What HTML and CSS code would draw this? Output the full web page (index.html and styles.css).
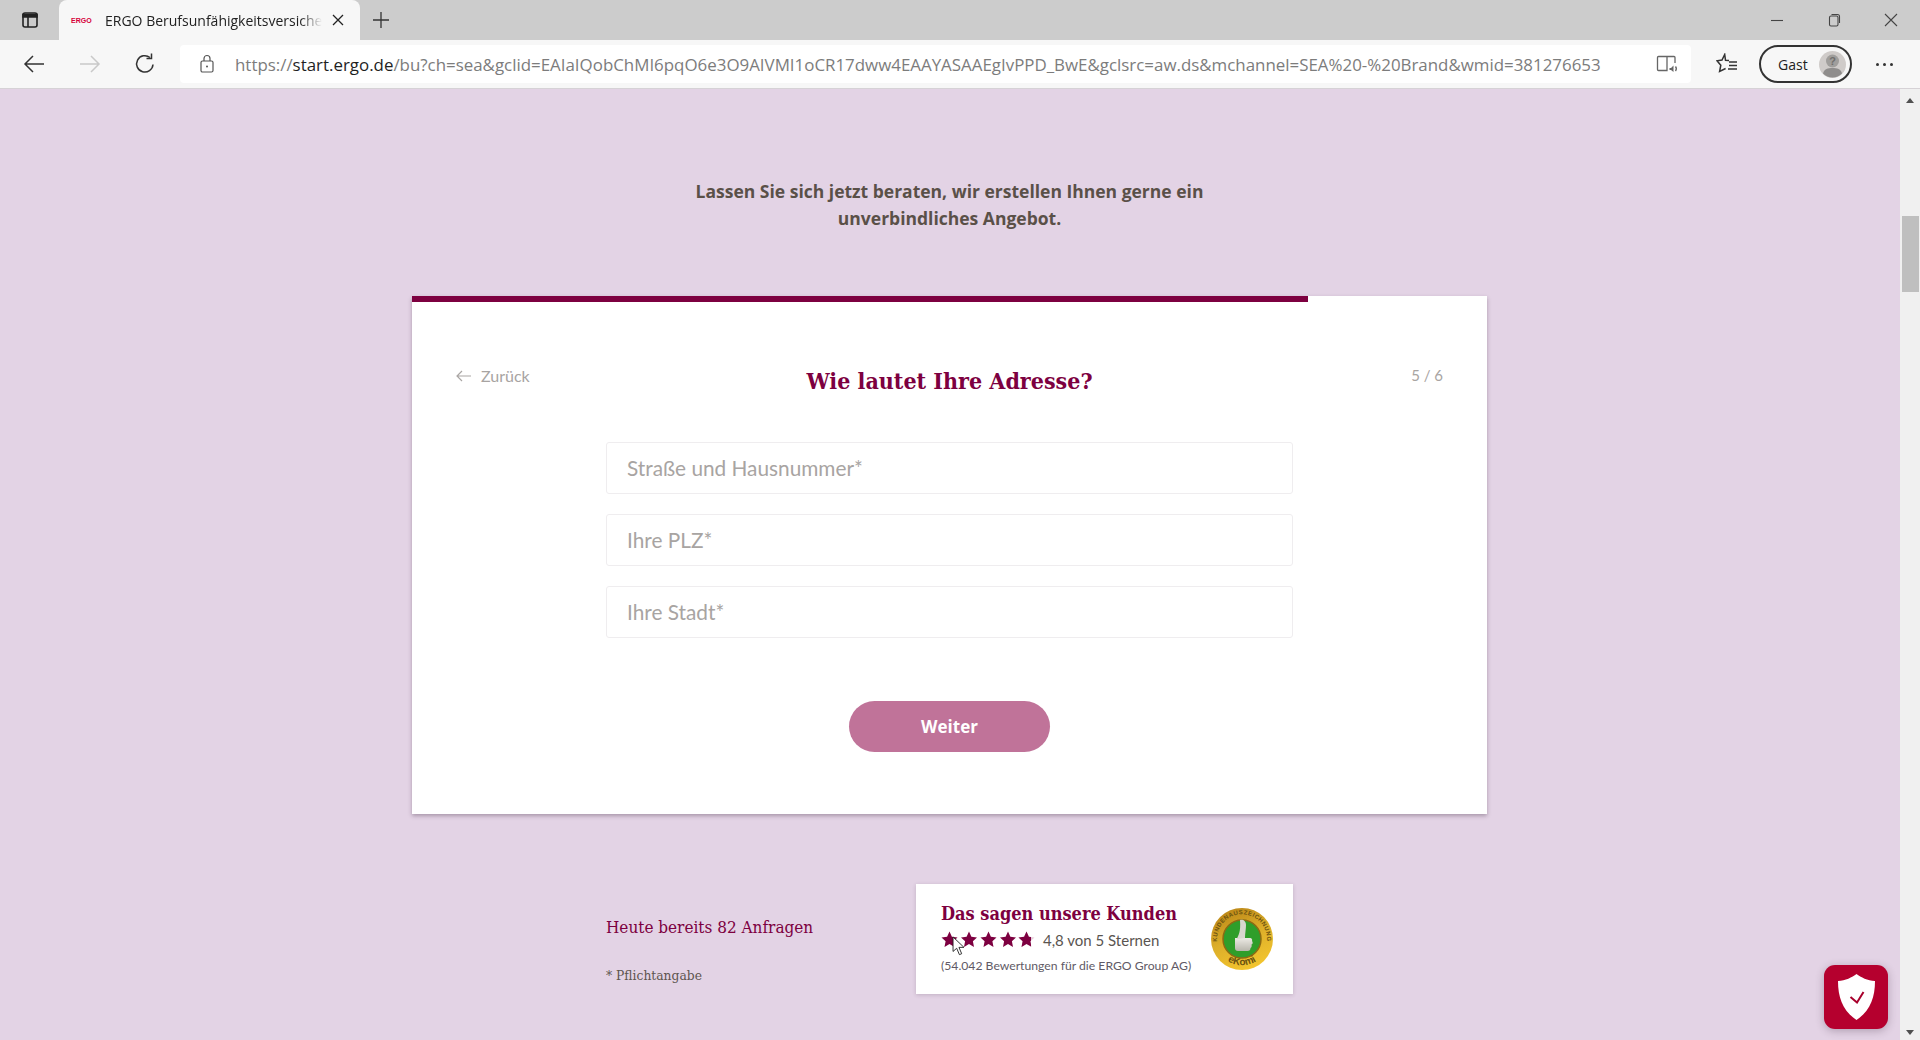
FILE: index.html
```html
<!DOCTYPE html>
<html>
<head>
    <title>ERGO Berufsunfähigkeitsversicherung</title>
    <link rel="stylesheet" href="styles.css">
</head>
<body>
    <div class="tabstrip">
        <div class="tab-menu">
            <svg width="20" height="20" viewBox="0 0 20 20" fill="none" stroke="#222" stroke-width="1.6"><rect x="3" y="3" width="14" height="14" rx="2"/><path d="M3 4.500h14v2.500H3z" fill="#222"/><path d="M8 7v10"/></svg>
        </div>
        <div class="tab">
            <span class="tab-logo">ERGO</span>
            <span class="tab-title">ERGO Berufsunfähigkeitsversiche</span>
            <svg class="tab-close" width="12" height="12" viewBox="0 0 12 12" stroke="#222" stroke-width="1.3"><path d="M1 1l10 10M11 1L1 11"/></svg>
        </div>
        <svg class="tab-new" width="18" height="18" viewBox="0 0 18 18" stroke="#333" stroke-width="1.3"><path d="M9 1v16M1 9h16"/></svg>
        <div class="win-buttons">
            <svg width="14" height="14" viewBox="0 0 14 14" stroke="#444" stroke-width="1.1" fill="none"><path d="M1 7.500h12"/></svg>
            <svg width="14" height="14" viewBox="0 0 14 14" stroke="#444" stroke-width="1.1" fill="none"><rect x="2.500" y="3" width="8.500" height="10" rx="1.500"/><path d="M4.500 1.500h6a2 2 0 0 1 2 2V10"/></svg>
            <svg width="14" height="14" viewBox="0 0 14 14" stroke="#444" stroke-width="1.1" fill="none"><path d="M1 1l12 12M13 1L1 13"/></svg>
        </div>
    </div>

    <div class="toolbar">
        <svg class="nav-back" width="24" height="24" viewBox="0 0 24 24" fill="none" stroke="#333" stroke-width="1.5"><path d="M22 12H3M11 4l-8 8 8 8"/></svg>
        <svg class="nav-forward" width="24" height="24" viewBox="0 0 24 24" fill="none" stroke="#c9c9c9" stroke-width="1.5"><path d="M2 12h19M13 4l8 8-8 8"/></svg>
        <svg class="nav-reload" width="24" height="24" viewBox="0 0 24 24" fill="none" stroke="#333" stroke-width="1.5"><path d="M20 12.500a8.200 8.200 0 1 1-3-7"/><path d="M18.500 1.500v5h-5"/></svg>
        <div class="addressbar">
            <svg width="16" height="20" viewBox="0 0 16 20" fill="none" stroke="#555" stroke-width="1.2"><rect x="2" y="7" width="12" height="11" rx="1.500"/><path d="M5 7V4.500a3 3 0 0 1 6 0V7"/><circle cx="8" cy="12.500" r="1" fill="#555" stroke="none"/></svg>
            <div class="url">https://<b>start.ergo.de</b>/bu?ch=sea&amp;gclid=EAIaIQobChMI6pqO6e3O9AIVMI1oCR17dww4EAAYASAAEgIvPPD_BwE&amp;gclsrc=aw.ds&amp;mchannel=SEA%20-%20Brand&amp;wmid=381276653</div>
            <svg class="read-aloud" width="22" height="20" viewBox="0 0 22 20" fill="none" stroke="#666" stroke-width="1.300"><path d="M11 2.500H2.500a1 1 0 0 0-1 1v12a1 1 0 0 0 1 1H11V2.500h7a1 1 0 0 1 1 1V9"/><path d="M13.500 14h1.500l2.500-2.500v6.500L15 16h-1.500z" fill="#666" stroke="none"/><path d="M19.500 12.500c.9 1.200.9 3.300 0 4.500"/></svg>
        </div>
        <svg class="fav" width="22" height="22" viewBox="0 0 22 22" fill="none" stroke="#333" stroke-width="1.500"><path d="M13 7.500l-3.500-.3L8.700 1.500 6 7 1 7.800l3.800 4.400-1.200 6.300 6-3"/><path d="M13 9h8M13 12.500h8M12 16h9"/></svg>
        <div class="profile">
            <span>Gast</span>
            <svg width="27" height="27" viewBox="0 0 27 27"><circle cx="13.500" cy="13.500" r="13.500" fill="#cfcbc9"/><circle cx="13.500" cy="10" r="6.500" fill="#a09e9c"/><path d="M4 22.500c1-4.500 5-5.500 9.500-5.500s8.500 1 9.500 5.500a13.500 13.500 0 0 1-19 0z" fill="#8f8d8c"/><text x="13.500" y="13.500" class="profile-q">?</text></svg>
        </div>
        <div class="more"><i></i><i></i><i></i></div>
    </div>

    <div class="viewport">
        <main class="page">
            <p class="intro">Lassen Sie sich jetzt beraten, wir erstellen Ihnen gerne ein<br>unverbindliches Angebot.</p>

            <section class="card">
                <div class="progress"><div class="progress-fill"></div></div>
                <div class="card-head">
                    <a class="back"><svg width="16" height="12" viewBox="0 0 16 12" fill="none" stroke="#aaa6a4" stroke-width="1.200"><path d="M15 6H1M6 1L1 6l5 5"/></svg>Zurück</a>
                    <h1>Wie lautet Ihre Adresse?</h1>
                    <span class="step">5 / 6</span>
                </div>
                <form class="fields">
                    <div class="field">Straße und Hausnummer*</div>
                    <div class="field">Ihre PLZ*</div>
                    <div class="field">Ihre Stadt*</div>
                </form>
                <button class="next" type="button">Weiter</button>
            </section>

            <div class="below">
                <div class="notes">
                    <div class="requests">Heute bereits 82 Anfragen</div>
                    <div class="required">* Pflichtangabe</div>
                </div>
                <div class="rating">
                    <div class="rating-text">
                        <h2>Das sagen unsere Kunden</h2>
                        <div class="stars-row">
                            <svg width="94" height="17" viewBox="0 0 94 17" fill="#7d0040">
                                <defs>
                                    <path id="star" d="M8.500 0.500l2.400 5.200 5.600.7-4.100 3.900 1.100 5.600-5-2.800-5 2.800 1.100-5.600L.5 6.400l5.600-.7z"/>
                                    <clipPath id="partial"><rect x="0" y="0" width="13" height="17"/></clipPath>
                                </defs>
                                <use href="#star"/>
                                <use href="#star" x="19.500"/>
                                <use href="#star" x="39"/>
                                <use href="#star" x="58.500"/>
                                <g transform="translate(77 0)">
                                    <use href="#star" opacity="0.2"/>
                                    <g clip-path="url(#partial)"><use href="#star"/></g>
                                </g>
                            </svg>
                            <span>4,8 von 5 Sternen</span>
                        </div>
                        <div class="count">(54.042 Bewertungen für die ERGO Group AG)</div>
                    </div>
                    <svg class="ekomi" width="62" height="62" viewBox="0 0 62 62">
                        <defs>
                            <linearGradient id="gold" x1="0.200" y1="0" x2="0.600" y2="1">
                                <stop offset="0" stop-color="#b98416"/>
                                <stop offset="0.500" stop-color="#dcae2a"/>
                                <stop offset="1" stop-color="#f3c52e"/>
                            </linearGradient>
                            <linearGradient id="silver" x1="0" y1="0" x2="0" y2="1">
                                <stop offset="0" stop-color="#eceae4"/>
                                <stop offset="1" stop-color="#b8b6ac"/>
                            </linearGradient>
                            <path id="ring" d="M9.500 44a25 25 0 1 1 43 0"/>
                            <path id="ring-low" d="M7 42a26.500 26.500 0 0 0 48 0"/>
                        </defs>
                        <circle cx="31" cy="31" r="31" fill="url(#gold)"/>
                        <circle cx="31" cy="31" r="19" fill="#2f9e2a" stroke="#8b6a14" stroke-width="1.500"/>
                        <path d="M24 30h15c2 0 2.500 2 2 3 1 1 1 3-.5 3.500.5 1.500 0 3-1 3.500 0 2-1 3-3 3H27c-2 0-3-1-3-3z" fill="url(#silver)"/>
                        <path d="M26 31c1-4 4-6 3-19 3-1 6 1 6 5 0 4-1 8-1 13z" fill="#d8d6ce"/>
                        <text class="ekomi-ring"><textPath href="#ring" startOffset="50%">KUNDENAUSZEICHNUNG</textPath></text>
                        <text class="ekomi-name"><textPath href="#ring-low" startOffset="50%">eKomi</textPath></text>
                    </svg>
                </div>
            </div>

            <div class="shield">
                <svg width="37" height="46" viewBox="0 0 37 46"><path d="M18.500 0c4.500 3.500 11 6.500 18.500 7 0 17-5 30-18.500 39C5 37 0 24 0 7c7.500-.5 14-3.500 18.500-7z" fill="#fff"/><path d="M12.500 23l6.500 5.500L25.500 18" fill="none" stroke="#a8002c" stroke-width="2"/></svg>
            </div>
            <svg class="cursor" width="13" height="20" viewBox="0 0 14 22"><path d="M1 1v16l4-3.500 3 7 2.500-1-3-7H13z" fill="#fff" stroke="#222" stroke-width="1"/></svg>
        </main>

        <div class="scrollbar">
            <div class="arrow-up"></div>
            <div class="thumb"></div>
            <div class="arrow-down"></div>
        </div>
    </div>
</body>
</html>
```

FILE: styles.css
```css
html, body {
    height: 100%;
}
body {
    margin: 0;
    height: 1040px;
    overflow: hidden;
    display: flex;
    flex-direction: column;
    font-family: "Lato", sans-serif;
    background: #e3d3e5;
}

/* browser chrome */
.tabstrip {
    height: 40px;
    background: #cccccc;
    display: flex;
    align-items: center;
    flex-shrink: 0;
}
.tab-menu {
    width: 59px;
    display: flex;
    justify-content: center;
}
.tab {
    width: 301px;
    height: 40px;
    box-sizing: border-box;
    padding: 0 16px 0 12px;
    background: #f7f7f7;
    border-radius: 8px 8px 0 0;
    display: flex;
    align-items: center;
    font-family: "Open Sans", sans-serif;
    font-size: 14px;
    color: #222;
}
.tab-logo {
    width: 28px;
    flex-shrink: 0;
    font-family: "Liberation Sans", sans-serif;
    font-size: 7px;
    font-weight: 700;
    color: #d6003a;
}
.tab-title {
    flex: 1;
    min-width: 0;
    margin-left: 6px;
    white-space: nowrap;
    -webkit-mask-image: linear-gradient(to right, #000 90%, transparent 100%);
    mask-image: linear-gradient(to right, #000 90%, transparent 100%);
}
.tab-close {
    margin-left: 10px;
    flex-shrink: 0;
}
.tab-new {
    margin-left: 12px;
}
.win-buttons {
    margin-left: auto;
    padding-right: 22px;
    display: flex;
    gap: 43px;
    align-items: center;
}
.toolbar {
    height: 48px;
    background: #f7f7f7;
    border-bottom: 1px solid #d6d2d6;
    display: flex;
    align-items: center;
    flex-shrink: 0;
}
.nav-back {
    margin-left: 22px;
}
.nav-forward {
    margin-left: 32px;
}
.nav-reload {
    margin-left: 31px;
}
.addressbar {
    margin-left: 23px;
    width: 1511px;
    height: 38px;
    box-sizing: border-box;
    padding-left: 19px;
    background: #fff;
    border-radius: 4px;
    display: flex;
    align-items: center;
}
.url {
    margin-left: 20px;
    flex: 1;
    min-width: 0;
    white-space: nowrap;
    font-family: "Open Sans", sans-serif;
    font-size: 16.9px;
    color: #7c7c7c;
}
.url b {
    font-weight: 400;
    color: #1f1f1f;
}
.read-aloud {
    margin: 0 13px 0 40px;
}
.fav {
    margin-left: 25px;
}
.profile {
    margin-left: 21px;
    width: 93px;
    height: 38px;
    box-sizing: border-box;
    padding: 0 4px 0 17px;
    border: 2px solid #333;
    border-radius: 19px;
    display: flex;
    align-items: center;
    justify-content: space-between;
    font-family: "Open Sans", sans-serif;
    font-size: 14px;
    color: #222;
}
.profile-q {
    font-family: "Liberation Sans", sans-serif;
    font-size: 11px;
    font-weight: 700;
    fill: #706e6d;
    text-anchor: middle;
}
.more {
    margin-left: 24px;
    display: flex;
    gap: 4px;
}
.more i {
    width: 3px;
    height: 3px;
    border-radius: 50%;
    background: #333;
}

/* page */
.viewport {
    flex: 1;
    min-height: 0;
    display: flex;
}
.page {
    flex: 1;
    position: relative;
    overflow: hidden;
    display: flex;
    flex-direction: column;
    align-items: center;
    padding: 89px 1px 0 0;
}
.intro {
    margin: 0;
    text-align: center;
    font-family: "Open Sans", sans-serif;
    font-size: 17.5px;
    font-weight: 700;
    line-height: 27px;
    color: #5a5048;
}
.card {
    margin-top: 64px;
    width: 1075px;
    height: 518px;
    background: #fff;
    box-shadow: 0 2px 4px rgba(60, 40, 60, 0.35);
    display: flex;
    flex-direction: column;
    align-items: center;
}
.progress {
    width: 100%;
    height: 6px;
}
.progress-fill {
    width: 83.33%;
    height: 100%;
    background: #7d0040;
}
.card-head {
    width: 100%;
    height: 32px;
    box-sizing: border-box;
    padding: 0 44px;
    margin-top: 63px;
    display: flex;
    align-items: flex-start;
    justify-content: space-between;
}
.back {
    width: 110px;
    padding-top: 1px;
    display: flex;
    align-items: center;
    gap: 9px;
    font-size: 16px;
    color: #a8a4a2;
}
h1 {
    margin: 2px 0 0;
    font-family: "DejaVu Serif Condensed", "DejaVu Serif", serif;
    font-size: 23px;
    font-weight: 700;
    color: #7d0040;
}
.step {
    width: 110px;
    padding-top: 1px;
    text-align: right;
    font-size: 15px;
    color: #a8a4a2;
}
.fields {
    margin-top: 45px;
    width: 687px;
    display: flex;
    flex-direction: column;
    gap: 20px;
}
.field {
    height: 52px;
    box-sizing: border-box;
    padding: 0 20px 2px;
    border: 1px solid #efedef;
    border-radius: 3px;
    display: flex;
    align-items: center;
    font-size: 20.8px;
    color: #a8a4a2;
}
.next {
    margin-top: 63px;
    width: 201px;
    height: 51px;
    border: none;
    border-radius: 26px;
    background: #c07399;
    color: #fff;
    font-family: "Open Sans", sans-serif;
    font-size: 17px;
    font-weight: 700;
}
.below {
    margin-top: 70px;
    width: 687px;
    display: flex;
    justify-content: space-between;
}
.notes {
    padding-top: 33px;
}
.requests {
    font-family: "DejaVu Serif Condensed", "DejaVu Serif", serif;
    font-size: 17px;
    color: #7d0040;
}
.required {
    margin-top: 30px;
    font-family: "DejaVu Serif Condensed", "DejaVu Serif", serif;
    font-size: 13.7px;
    color: #5e554f;
}
.rating {
    width: 377px;
    height: 110px;
    box-sizing: border-box;
    padding: 0 20px 0 25px;
    background: #fff;
    box-shadow: 0 1px 4px rgba(60, 40, 60, 0.2);
    display: flex;
    align-items: center;
    justify-content: space-between;
}
.rating-text {
    padding-bottom: 3px;
}
.rating h2 {
    margin: 0;
    font-family: "DejaVu Serif Condensed", "DejaVu Serif", serif;
    font-size: 18px;
    font-weight: 700;
    color: #7d0040;
}
.stars-row {
    margin-top: 7px;
    display: flex;
    align-items: center;
    gap: 8px;
    font-size: 15px;
    color: #5a5551;
}
.count {
    margin-top: 9px;
    font-size: 12.2px;
    color: #5f5a66;
}
.ekomi-ring {
    font-family: "Liberation Sans", sans-serif;
    font-size: 6px;
    font-weight: 700;
    letter-spacing: 0.5px;
    fill: #6b5210;
    text-anchor: middle;
}
.ekomi-name {
    font-family: "Liberation Sans", sans-serif;
    font-size: 10px;
    font-weight: 700;
    fill: #6b5210;
    text-anchor: middle;
}
.shield {
    position: absolute;
    left: 1824px;
    top: 876px;
    width: 64px;
    height: 64px;
    border-radius: 11px;
    background: #b5002e;
    box-shadow: 0 2px 8px rgba(60, 40, 60, 0.3);
    display: flex;
    align-items: center;
    justify-content: center;
}
.cursor {
    position: absolute;
    left: 952px;
    top: 847px;
}

/* scrollbar */
.scrollbar {
    width: 20px;
    background: #f0f0f0;
    display: flex;
    flex-direction: column;
    align-items: center;
}
.arrow-up, .arrow-down {
    width: 0;
    height: 0;
    border-left: 4.500px solid transparent;
    border-right: 4.500px solid transparent;
}
.arrow-up {
    margin-top: 9px;
    border-bottom: 5px solid #505050;
}
.thumb {
    margin-top: 113px;
    width: 17px;
    height: 76px;
    background: #bfbfbf;
}
.arrow-down {
    margin-top: auto;
    margin-bottom: 5px;
    border-top: 5px solid #505050;
}
```
